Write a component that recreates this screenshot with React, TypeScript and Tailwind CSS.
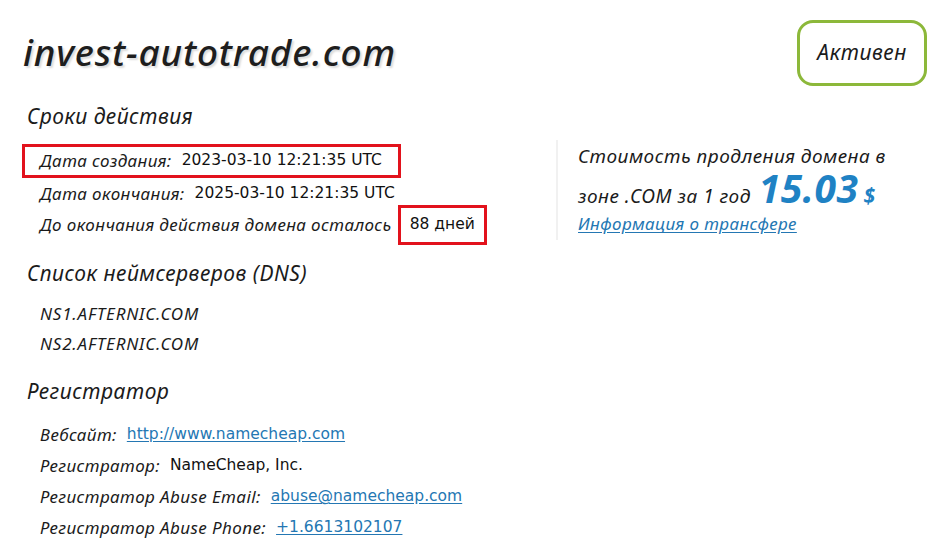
import React from "react";

const label = "italic text-[17px] tracking-[0.4px] text-[#1b1b1b]";
const value = "font-['DejaVu_Sans',sans-serif] text-[15.5px] text-[#111]";
const link = "font-['DejaVu_Sans',sans-serif] text-[15.5px] text-[#2477b3] underline underline-offset-2";
const heading = "text-[21px] italic leading-[28px] tracking-[0.5px]";

function Row({ name, children }: { name: string; children: React.ReactNode }) {
  return (
    <div className="flex h-[31px] items-center gap-[10px]">
      <span className={label}>{name}</span>
      {children}
    </div>
  );
}

export default function App() {
  return (
    <div className="h-[548px] w-[944px] overflow-hidden bg-white font-['Noto_Sans',sans-serif] text-[#1b1b1b]">
      <div className="flex items-start justify-between pl-[23px] pr-[17px] pt-[20px]">
        <h1 className="mt-[10px] text-[37px] font-medium italic leading-[44px] tracking-[0.8px] text-[#1e1e1e] [text-shadow:2px_2px_2px_#dcdcdc]">
          invest-autotrade.com
        </h1>
        <div className="flex h-[66px] w-[130px] items-center justify-center rounded-[16px] border-[3px] border-[#8cb83a] text-[21px] italic tracking-[0.5px]">
          Активен
        </div>
      </div>

      <div className="flex pl-[27px]">
        <div className="w-[529px]">
          <h2 className={`mt-[16px] ${heading}`}>Сроки действия</h2>
          <div className="mt-[14px] -ml-[5px] flex h-[34px] w-[379px] items-center gap-[10px] border-[3px] border-[#e2121c] pl-[15px]">
            <span className={label}>Дата создания:</span>
            <span className={value}>2023-03-10 12:21:35 UTC</span>
          </div>
          <div className="pl-[13px]">
            <Row name="Дата окончания:">
              <span className={value}>2025-03-10 12:21:35 UTC</span>
            </Row>
            <div className="-mt-[4px] flex items-center gap-[6px]">
              <span className={label}>До окончания действия домена осталось</span>
              <span className={`${value} flex h-[40px] w-[89px] items-center justify-center border-[3px] border-[#e2121c]`}>88 дней</span>
            </div>
          </div>

          <h2 className={`mt-[14px] ${heading}`}>Список неймсерверов (DNS)</h2>
          <div className="mt-[12px] pl-[13px] text-[17px] italic tracking-[0.8px]">
            <div className="h-[30px] leading-[30px]">NS1.AFTERNIC.COM</div>
            <div className="h-[30px] leading-[30px]">NS2.AFTERNIC.COM</div>
          </div>

          <h2 className={`mt-[18px] ${heading}`}>Регистратор</h2>
          <div className="mt-[14px] pl-[13px]">
            <Row name="Вебсайт:">
              <a className={link}>http://www.namecheap.com</a>
            </Row>
            <Row name="Регистратор:">
              <span className={value}>NameCheap, Inc.</span>
            </Row>
            <Row name="Регистратор Abuse Email:">
              <a className={link}>abuse@namecheap.com</a>
            </Row>
            <Row name="Регистратор Abuse Phone:">
              <a className={link}>+1.6613102107</a>
            </Row>
          </div>
        </div>

        <div className="mt-[54px] h-[100px] border-l-2 border-[#f1f1f1] pl-[20px]">
          <div className="text-[19px] italic leading-[32px] tracking-[0.5px]">Стоимость продления домена в</div>
          <div className="flex h-[31px] items-baseline text-[19px] italic leading-[31px] tracking-[0.5px]">
            <span>зоне .COM за 1 год</span>
            <span className="ml-[8px] text-[39px] font-bold leading-[31px] tracking-[0.5px] text-[#1f82c4]">15.03</span>
            <span className="ml-[5px] text-[21px] font-bold text-[#1f82c4]">$</span>
          </div>
          <a className="mt-[8px] block text-[17px] italic leading-[26px] tracking-[0.4px] text-[#2477b3] underline underline-offset-2">
            Информация о трансфере
          </a>
        </div>
      </div>
    </div>
  );
}
